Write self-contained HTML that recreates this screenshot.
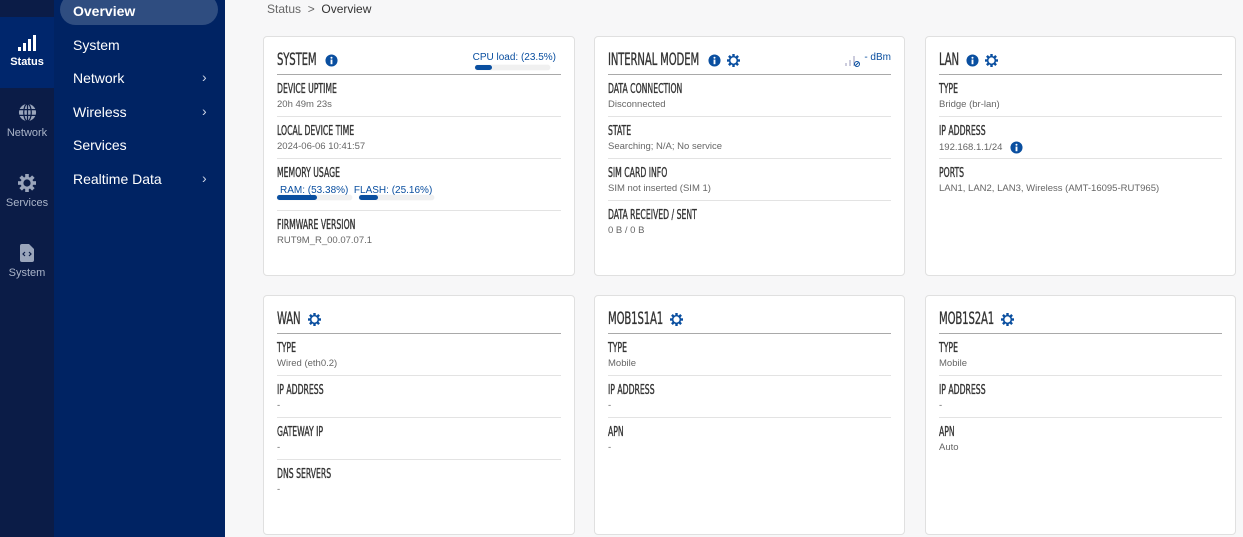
<!DOCTYPE html>
<html><head><meta charset="utf-8">
<style>
*{box-sizing:border-box;margin:0;padding:0}
body{width:1243px;height:537px;overflow:hidden;background:#f7f7f8;font-family:"Liberation Sans",sans-serif;position:relative}
.rail{position:absolute;left:0;top:0;width:54px;height:537px;background:#0b1c47}
.rail .it{position:absolute;left:0;width:54px;text-align:center;color:#aab4c8;font-size:12px}
.rail .act{background:#00266c;color:#fff;font-weight:bold}
.nav{position:absolute;left:54px;top:0;width:171px;height:537px;background:#002363}
.nav .ni{position:absolute;left:19px;color:#fff;font-size:14px}
.nav .ar{position:absolute;left:148px;color:#cdd5e5;font-size:14px}
.pill{position:absolute;left:6px;top:-6px;width:158px;height:31px;border-radius:16px;background:#2f4d80}
.bc{position:absolute;left:267px;top:2px;font-size:12px;color:#666}
.bc b{color:#333;font-weight:normal}
.card{position:absolute;background:#fff;border:1px solid #e0e0e0;border-radius:4px;padding:0 13px 0 13px}
.cond{display:inline-block;font-family:"DejaVu Sans Condensed","DejaVu Sans",sans-serif;font-weight:normal;-webkit-text-stroke:0.35px #333;transform:scaleX(.66);transform-origin:left;white-space:nowrap;color:#333}
.tt{height:38px;border-bottom:1px solid #a9a9a9;position:relative;padding-top:13px}
.tt .cond{font-size:17px;letter-spacing:-.2px}
.row{height:42px;border-bottom:1px solid #e3e3e3;padding-top:5px;position:relative}
.row:last-child{border-bottom:none}
.lab{font-size:13px;line-height:16px}
.val{font-size:9.5px;color:#666;margin-top:1px;line-height:12px;white-space:nowrap}
.ico{position:absolute;top:17px}
.bar{display:inline-block;height:5px;border-radius:3px;background:#f0f0f0;position:relative;box-shadow:0 0 1px #ddd}
.bar i{position:absolute;left:0;top:0;height:5px;border-radius:3px;background:#0a4fa0}
.blue{color:#0a4fa0}
</style></head><body>
<div class="rail">
 <div class="it act" style="top:17px;height:71px">
  <svg width="18" height="16" viewBox="0 0 18 16" style="margin-top:18px"><rect x="0" y="12" width="3" height="4" fill="#fff"/><rect x="5" y="8" width="3" height="8" fill="#fff"/><rect x="10" y="4" width="3" height="12" fill="#fff"/><rect x="15" y="0" width="3" height="16" fill="#fff"/></svg>
  <div style="margin-top:2px;font-size:11px">Status</div></div>
 <div class="it" style="top:103px">
  <svg width="19" height="19" viewBox="0 0 20 20"><circle cx="10" cy="10" r="9" fill="#9aa5bb"/><g stroke="#0b1c47" stroke-width="1.3" fill="none"><ellipse cx="10" cy="10" rx="4" ry="9"/><line x1="1" y1="7" x2="19" y2="7"/><line x1="1" y1="13" x2="19" y2="13"/><line x1="10" y1="1" x2="10" y2="19"/></g></svg>
  <div style="margin-top:2px;font-size:11px">Network</div></div>
 <div class="it" style="top:174px">
  <svg width="18" height="18" viewBox="0 0 20 20"><g fill="#9aa5bb"><circle cx="10" cy="10" r="7"/><rect x="8" y="0" width="4" height="20"/><rect x="0" y="8" width="20" height="4"/><rect x="8" y="0" width="4" height="20" transform="rotate(45 10 10)"/><rect x="8" y="0" width="4" height="20" transform="rotate(-45 10 10)"/></g><circle cx="10" cy="10" r="4" fill="#0b1c47"/></svg>
  <div style="margin-top:2px;font-size:11px">Services</div></div>
 <div class="it" style="top:244px">
  <svg width="14" height="18" viewBox="0 0 14 18"><path d="M0 2a2 2 0 0 1 2-2h7l5 5v11a2 2 0 0 1-2 2H2a2 2 0 0 1-2-2z" fill="#9aa5bb"/><path d="M5 8l-2 2 2 2M9 8l2 2-2 2" stroke="#0b1c47" stroke-width="1.2" fill="none"/></svg>
  <div style="margin-top:2px;font-size:11px">System</div></div>
</div>
<div class="nav">
 <div class="pill"></div>
 <div class="ni" style="top:3px;font-weight:bold">Overview</div>
 <div class="ni" style="top:37px">System</div>
 <div class="ni" style="top:70px">Network</div><div class="ar" style="top:69px">›</div>
 <div class="ni" style="top:104px">Wireless</div><div class="ar" style="top:103px">›</div>
 <div class="ni" style="top:137px">Services</div>
 <div class="ni" style="top:171px">Realtime Data</div><div class="ar" style="top:170px">›</div>
</div>
<div class="bc">Status &nbsp;&gt;&nbsp; <b>Overview</b></div>

<svg width="0" height="0" style="position:absolute"><defs>
<symbol id="inf" viewBox="0 0 14 14"><circle cx="7" cy="7" r="6.5" fill="#0a4fa0"/><rect x="6" y="6" width="2" height="5" fill="#fff"/><circle cx="7" cy="4" r="1.1" fill="#fff"/></symbol>
<symbol id="gear" viewBox="0 0 14 14"><g fill="#0a4fa0"><circle cx="7" cy="7" r="5"/><rect x="5.7" y="0" width="2.6" height="14"/><rect x="0" y="5.7" width="14" height="2.6"/><rect x="5.7" y="0" width="2.6" height="14" transform="rotate(45 7 7)"/><rect x="5.7" y="0" width="2.6" height="14" transform="rotate(-45 7 7)"/></g><circle cx="7" cy="7" r="3.3" fill="#fff"/></symbol>
</defs></svg>

<div class="card" style="left:263px;top:36px;width:312px;height:240px">
 <div class="tt"><span class="cond">SYSTEM</span><svg class="ico" style="left:48px" width="13" height="13"><use href="#inf"/></svg>
  <div style="position:absolute;right:5px;top:15px;font-size:10px" class="blue">CPU load: (23.5%)</div>
  <div class="bar" style="position:absolute;left:198px;top:28px;width:75px"><i style="width:17px"></i></div></div>
 <div class="row"><div class="lab cond">DEVICE UPTIME</div><div class="val">20h 49m 23s</div></div>
 <div class="row"><div class="lab cond">LOCAL DEVICE TIME</div><div class="val">2024-06-06 10:41:57</div></div>
 <div class="row" style="height:52px"><div class="lab cond">MEMORY USAGE</div>
  <div class="blue" style="font-size:10px;margin-top:3px;padding-left:3px;white-space:nowrap">RAM: (53.38%) &nbsp;FLASH: (25.16%)</div>
  <div class="bar" style="position:absolute;left:0;top:36px;width:75px"><i style="width:40px"></i></div>
  <div class="bar" style="position:absolute;left:82px;top:36px;width:75px"><i style="width:19px"></i></div></div>
 <div class="row"><div class="lab cond">FIRMWARE VERSION</div><div class="val">RUT9M_R_00.07.07.1</div></div>
</div>

<div class="card" style="left:594px;top:36px;width:311px;height:240px">
 <div class="tt"><span class="cond">INTERNAL MODEM</span><svg class="ico" style="left:100px" width="13" height="13"><use href="#inf"/></svg><svg class="ico" style="left:119px" width="13" height="13"><use href="#gear"/></svg>
  <svg style="position:absolute;left:237px;top:16px" width="16" height="14" viewBox="0 0 16 14"><rect x="0" y="10" width="2" height="3" fill="#ccd"/><rect x="4" y="7" width="2" height="6" fill="#ccd"/><rect x="8" y="3" width="2" height="10" fill="#ccd"/><circle cx="12" cy="11" r="2.5" fill="none" stroke="#0a4fa0" stroke-width="1"/><line x1="10.5" y1="12.5" x2="13.5" y2="9.5" stroke="#0a4fa0"/></svg>
  <div style="position:absolute;right:0;top:15px;font-size:10px" class="blue">- dBm</div></div>
 <div class="row"><div class="lab cond">DATA CONNECTION</div><div class="val">Disconnected</div></div>
 <div class="row"><div class="lab cond">STATE</div><div class="val">Searching; N/A; No service</div></div>
 <div class="row"><div class="lab cond">SIM CARD INFO</div><div class="val">SIM not inserted (SIM 1)</div></div>
 <div class="row"><div class="lab cond">DATA RECEIVED / SENT</div><div class="val">0 B / 0 B</div></div>
</div>

<div class="card" style="left:925px;top:36px;width:311px;height:240px">
 <div class="tt"><span class="cond">LAN</span><svg class="ico" style="left:27px" width="13" height="13"><use href="#inf"/></svg><svg class="ico" style="left:46px" width="13" height="13"><use href="#gear"/></svg></div>
 <div class="row"><div class="lab cond">TYPE</div><div class="val">Bridge (br-lan)</div></div>
 <div class="row"><div class="lab cond">IP ADDRESS</div><div class="val">192.168.1.1/24 &nbsp;&nbsp;<svg width="13" height="13" style="vertical-align:middle"><use href="#inf"/></svg></div></div>
 <div class="row"><div class="lab cond">PORTS</div><div class="val">LAN1, LAN2, LAN3, Wireless (AMT-16095-RUT965)</div></div>
</div>

<div class="card" style="left:263px;top:295px;width:312px;height:240px">
 <div class="tt"><span class="cond">WAN</span><svg class="ico" style="left:31px" width="13" height="13"><use href="#gear"/></svg></div>
 <div class="row"><div class="lab cond">TYPE</div><div class="val">Wired (eth0.2)</div></div>
 <div class="row"><div class="lab cond">IP ADDRESS</div><div class="val">-</div></div>
 <div class="row"><div class="lab cond">GATEWAY IP</div><div class="val">-</div></div>
 <div class="row"><div class="lab cond">DNS SERVERS</div><div class="val">-</div></div>
</div>

<div class="card" style="left:594px;top:295px;width:311px;height:240px">
 <div class="tt"><span class="cond">MOB1S1A1</span><svg class="ico" style="left:62px" width="13" height="13"><use href="#gear"/></svg></div>
 <div class="row"><div class="lab cond">TYPE</div><div class="val">Mobile</div></div>
 <div class="row"><div class="lab cond">IP ADDRESS</div><div class="val">-</div></div>
 <div class="row"><div class="lab cond">APN</div><div class="val">-</div></div>
</div>

<div class="card" style="left:925px;top:295px;width:311px;height:240px">
 <div class="tt"><span class="cond">MOB1S2A1</span><svg class="ico" style="left:62px" width="13" height="13"><use href="#gear"/></svg></div>
 <div class="row"><div class="lab cond">TYPE</div><div class="val">Mobile</div></div>
 <div class="row"><div class="lab cond">IP ADDRESS</div><div class="val">-</div></div>
 <div class="row"><div class="lab cond">APN</div><div class="val">Auto</div></div>
</div>
</body></html>
